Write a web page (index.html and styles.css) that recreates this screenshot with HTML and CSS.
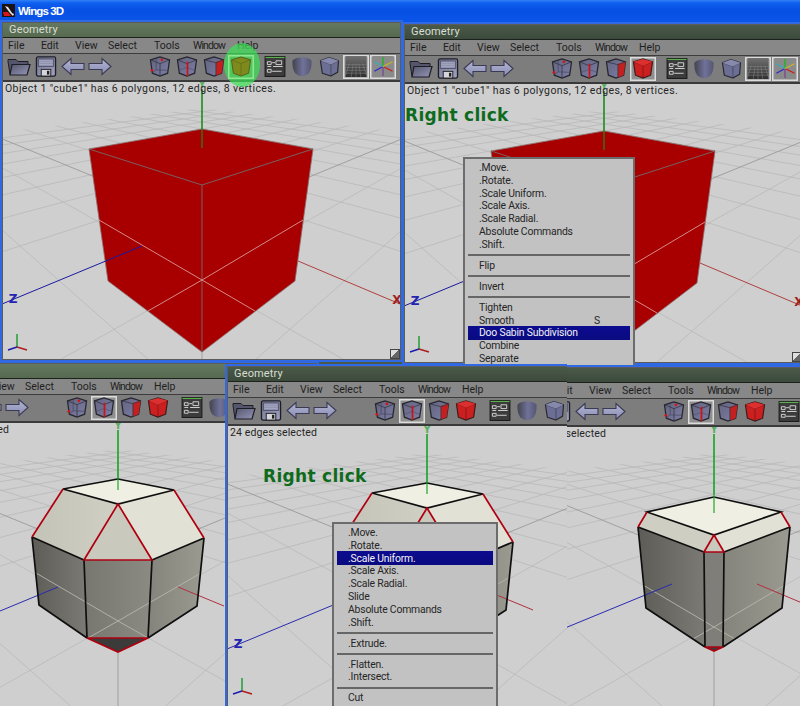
FILE: index.html
```html
<!DOCTYPE html>
<html lang="en">
<head>
<meta charset="utf-8">
<title>Wings 3D</title>
<link rel="stylesheet" href="styles.css">
</head>
<body>
<svg class="defs" aria-hidden="true">
  <defs>
    <linearGradient id="gBody" x1="0" y1="0" x2="1" y2="1"><stop offset="0" stop-color="#55566c"/><stop offset="1" stop-color="#9496b8"/></linearGradient>
    <linearGradient id="gFlop" x1="0" y1="0" x2="1" y2="1"><stop offset="0" stop-color="#74758f"/><stop offset="1" stop-color="#a0a2c2"/></linearGradient>
    <linearGradient id="gArrow" x1="0" y1="0" x2="0" y2="1"><stop offset="0" stop-color="#b4b6d4"/><stop offset="1" stop-color="#8a8cb2"/></linearGradient>
    <linearGradient id="gShade" x1="0" y1="0" x2="1" y2="0"><stop offset="0" stop-color="#43434f"/><stop offset=".55" stop-color="#70729a"/><stop offset="1" stop-color="#555670"/></linearGradient>
    <linearGradient id="gCube" x1="0" y1="0" x2="1" y2="1"><stop offset="0" stop-color="#63647f"/><stop offset="1" stop-color="#7c7ea6"/></linearGradient>
    <linearGradient id="gFloor" x1="0" y1="0" x2="0" y2="1"><stop offset="0" stop-color="#707070"/><stop offset="1" stop-color="#2f2f2f"/></linearGradient>
    <linearGradient id="gSideL" x1="0" y1="0" x2="1" y2="0"><stop offset="0" stop-color="#5d5c57"/><stop offset="1" stop-color="#7b7a74"/></linearGradient>
    <linearGradient id="gFront" x1="0" y1="0" x2="1" y2="0"><stop offset="0" stop-color="#77766f"/><stop offset="1" stop-color="#8b8a83"/></linearGradient>
    <linearGradient id="gSideR" x1="0" y1="0" x2="1" y2="0"><stop offset="0" stop-color="#85847c"/><stop offset="1" stop-color="#9b9a90"/></linearGradient>
    <linearGradient id="gUpL" x1="0" y1="0" x2="1" y2="0"><stop offset="0" stop-color="#c4c3b8"/><stop offset="1" stop-color="#d0cfc4"/></linearGradient>
    <clipPath id="floorClip"><polygon points="0,-113 -240,-84 -240,160 240,160 240,-84"/></clipPath>

    <symbol id="i-folder" viewBox="0 0 24 20">
      <path d="M3 18 1 5V3h8l2 2h10v4z" fill="#55566c" stroke="#1d1d26"/>
      <path d="M3 18.5 5 8h18l-3 10.500z" fill="url(#gBody)" stroke="#1d1d26" stroke-width="1.200"/>
    </symbol>
    <symbol id="i-floppy" viewBox="0 0 22 22">
      <rect x="1" y="1" width="20" height="20" rx="1.500" fill="url(#gFlop)" stroke="#1e1e28" stroke-width="1.400"/>
      <path d="M3 3h16v8H3z" fill="#8f90ac" stroke="#44445a" stroke-width=".8"/>
      <path d="M4 5h14M4 7h14M4 9h14" stroke="#b0b2cc" stroke-width=".7"/>
      <rect x="6" y="14" width="10" height="7" fill="#d5d5dd" stroke="#222"/>
      <rect x="12" y="15.500" width="2.500" height="4" fill="#222"/>
    </symbol>
    <symbol id="i-left" viewBox="0 0 24 20">
      <path d="M1 10 10 2v5h13v6H10v5z" fill="url(#gArrow)" stroke="#3a3a55" stroke-width="1.100"/>
    </symbol>
    <symbol id="i-right" viewBox="0 0 24 20">
      <path d="M23 10 14 2v5H1v6h13v5z" fill="url(#gArrow)" stroke="#3a3a55" stroke-width="1.100"/>
    </symbol>
    <symbol id="i-vertex" viewBox="0 0 22 22">
      <path d="M1 4 11 1l10 3-2 14-8 3-8-3z" fill="url(#gCube)" stroke="#26262e" stroke-width="1.300"/>
      <path d="M1 4l10 4 10-4M11 8v13" fill="none" stroke="#33333e" stroke-width=".8"/>
      <path d="M7 3.500v11l-4 3M7 14.500l12 .500" fill="none" stroke="#3b3b50" stroke-width=".6"/>
      <circle cx="13" cy="4" r="1.500" fill="#d01818"/><circle cx="2.500" cy="15" r="1.500" fill="#d01818"/>
    </symbol>
    <symbol id="i-edge" viewBox="0 0 22 22">
      <path d="M1 4 11 1l10 3-2 14-8 3-8-3z" fill="url(#gCube)" stroke="#26262e" stroke-width="1.300"/>
      <path d="M1 4l10 4 10-4" fill="none" stroke="#33333e" stroke-width=".8"/>
      <path d="M3 15l8-3 8 3" fill="none" stroke="#4a4a66" stroke-width=".6"/>
      <path d="M11.500 6v15" stroke="#cc1414" stroke-width="1.800"/>
    </symbol>
    <symbol id="i-face" viewBox="0 0 22 22">
      <path d="M1 4 11 1l10 3-2 14-8 3-8-3z" fill="url(#gCube)" stroke="#26262e" stroke-width="1.300"/>
      <path d="M13 6 21 4l-2 14-6 2.500z" fill="#c42020"/>
      <path d="M1 4l12 3 8-3M13 7v14" fill="none" stroke="#33333e" stroke-width=".8"/>
    </symbol>
    <symbol id="i-solid" viewBox="0 0 22 22">
      <path d="M1 4 11 1l10 3-2 14-8 3-8-3z" fill="#cc2020" stroke="#3a1a1a" stroke-width="1.200"/>
      <path d="M1 4l10 4 10-4M11 8v13" fill="none" stroke="#7a1212" stroke-width=".8"/>
      <path d="M1 4 11 1l10 3-10 4z" fill="#dc3030"/>
    </symbol>
    <symbol id="i-olive" viewBox="0 0 22 22">
      <path d="M1 4 11 1l10 3-2 14-8 3-8-3z" fill="#7f8a1c" stroke="#55601a" stroke-width="1"/>
      <path d="M1 4l10 4 10-4M11 8v13" fill="none" stroke="#62701a" stroke-width=".8"/>
    </symbol>
    <symbol id="i-panel" viewBox="0 0 22 22">
      <rect x=".6" y=".6" width="20.800" height="20.800" fill="#3c3c3c" stroke="#151515"/>
      <path d="M1 1.500h20" stroke="#5ab04a" stroke-width="1.200"/>
      <path d="M3 6h4v3H3zM3 14h4v3H3zM12 5h6v4h-6z" fill="none" stroke="#d4d4d4"/>
      <path d="M8 7h3M9 11h10M3 11h4M8 16h10" stroke="#d4d4d4"/>
    </symbol>
    <symbol id="i-shaded" viewBox="0 0 22 22">
      <path d="M1 5C3 2 8 1.500 11 1.500S19 2 21 5c0 5 0 9-3 13-2 2-5 3-7 3s-5-1-7-3C1 14 1 10 1 5z" fill="url(#gShade)"/>
    </symbol>
    <symbol id="i-smooth" viewBox="0 0 22 22">
      <path d="M2 5 11 1.500 21 5l-1 12-7 4-9-3z" fill="#6c6e94" stroke="#26262f" stroke-width="1.200" stroke-linejoin="round"/>
      <path d="M2 5l11 4 8-4M13 9v12" fill="none" stroke="#3b3b52" stroke-width=".7"/>
      <path d="M2 5 11 1.500 21 5l-8 4z" fill="#8688ac"/>
    </symbol>
    <symbol id="i-grid" viewBox="0 0 22 22">
      <rect width="22" height="22" fill="url(#gFloor)"/>
      <path d="M0 9 22 9M0 12h22M0 15h22M0 18h22M4 8 0 20M8 8 6 22M11 8v14M14 8l2 14M18 8l4 12" stroke="#8a8a8a" stroke-width=".5"/>
    </symbol>
    <symbol id="i-axes" viewBox="0 0 22 22">
      <rect width="22" height="22" fill="#8a8a8a"/>
      <path d="M11 11 2 16" stroke="#2a2ad0" stroke-width="1.400"/>
      <path d="M11 11 21 16" stroke="#d01818" stroke-width="1.400"/>
      <path d="M11 11V1" stroke="#18b818" stroke-width="1.400"/>
      <path d="M11 11v10" stroke="#7a4a90" stroke-width="1.400"/>
      <path d="M11 11 21 6" stroke="#c8b820" stroke-width="1.400"/>
      <path d="M11 11 2 6" stroke="#30b0c0" stroke-width="1.400"/>
    </symbol>

    <g id="floor">
      <g clip-path="url(#floorClip)" stroke="#b9b9b9" stroke-width=".8" fill="none">
        <path d="M-220 -8.700 220 380.700M-220 -64.500 220 182.500M-220 -105.300 220 37.300M-220 -115 220 2.800M-220 -121.800 220 -21.400M-220 -126.800 220 -39.400M-220 -130.700 220 -53.300M-220 -133.800 220 -64.200M-220 -136.300 220 -73.100M-220 -138.400 220 -80.400"/>
        <path d="M220 -8.700-220 380.700M220 -64.500-220 182.500M220 -105.300-220 37.300M220 -115-220 2.800M220 -121.800-220 -21.400M220 -126.800-220 -39.400M220 -130.700-220 -53.300M220 -133.800-220 -64.200M220 -136.300-220 -73.100M220 -138.400-220 -80.400"/>
      </g>
      <path d="M-220 -90.400 0 0M220 -90.400 0 0M0 0V145" stroke="#9a9a9a" stroke-width=".9" fill="none"/>
      <path d="M0 -132V-72" stroke="#1fa52a" stroke-width="1.200"/>
    </g>
    <g id="labels">
      <text x="0" y="-133" class="lab lab-y">Y</text>
      <text x="-189" y="82" class="lab lab-z">Z</text>
      <text x="195" y="83" class="lab lab-x">X</text>
    </g>
    <g id="mini">
      <path d="M14 265V252" stroke="#159a2a" stroke-width="1.400"/>
      <path d="M14 265 5 268" stroke="#1c1cb0" stroke-width="1.400"/>
      <path d="M14 265 24 268" stroke="#b01c1c" stroke-width="1.400"/>
    </g>
    <g id="redcube">
      <polygon points="-113,-72 0,-92 111,-72 93,60 0,131 -94,60" fill="#a80000" stroke="#8a7070" stroke-width=".8"/>
      <path d="M-113 -72 0 -36 111 -72M0 -36V131" fill="none" stroke="#7a6060" stroke-width="1"/>
      <path d="M-103 -1 0 59 101 -1M0 59-54 90M0 59 53 90" fill="none" stroke="#d89a9a" stroke-width=".9"/>
      <path d="M0 -132V-73" stroke="#1f8a1f" stroke-width="1.200"/>
      <path d="M-60 25-200 83" stroke="#1a1aa0" stroke-width="1"/>
      <path d="M96 40 198 83" stroke="#b04040" stroke-width="1"/>
    </g>
    <g id="dooCube">
      <polygon points="0,-83 -55,-73 0,-58 56,-72" fill="#efefe4"/>
      <polygon points="-55,-73 0,-58 -34,-2 -86,-25" fill="url(#gUpL)"/>
      <polygon points="56,-72 0,-58 34,-2 86,-24" fill="#e2e1d5"/>
      <polygon points="0,-58 -34,-2 34,-2" fill="#cac9bd"/>
      <polygon points="-86,-25 -34,-2 -31,76 -79,43" fill="url(#gSideL)"/>
      <polygon points="-34,-2 34,-2 30,76 -31,76" fill="url(#gFront)"/>
      <polygon points="34,-2 86,-24 79,44 30,76" fill="url(#gSideR)"/>
      <polygon points="-31,76 30,76 0,90" fill="#3b3b39"/>
      <path d="M-82 11 0 59 83 11M0 59-30 76M0 59 30 76" fill="none" stroke="#b5b5ae" stroke-width=".9"/>
      <path d="M-60 25-200 83" stroke="#2a2ab0" stroke-width="1"/>
      <path d="M60 25 106 44" stroke="#b03040" stroke-width="1"/>
      <path d="M0 -83-55 -73 0 -58 56 -72zM-86 -25-34 -2M34 -2 86 -24M-86 -25-79 43-31 76M86 -24 79 44 30 76M-34 -2-31 76M34 -2 30 76" fill="none" stroke="#0f0f0f" stroke-width="1.700"/>
      <path d="M-55 -73-86 -25M56 -72 86 -24M0 -58-34 -2H34zM-31 76H30L0 90z" fill="none" stroke="#b00010" stroke-width="1.700"/>
      <path d="M0 -132V-72" stroke="#1fa52a" stroke-width="1.200"/>
    </g>
    <g id="chamferCube">
      <polygon points="0,-69 -67,-54 0,-31 67,-54" fill="#efefe4"/>
      <polygon points="-67,-54 0,-31 -10,-14 -76,-39" fill="#cfcec3"/>
      <polygon points="67,-54 0,-31 10,-14 76,-39" fill="#e2e1d5"/>
      <polygon points="0,-31 -10,-14 10,-14" fill="#cac9bd"/>
      <polygon points="-76,-39 -10,-14 -9,81 -68,42" fill="url(#gSideL)"/>
      <polygon points="-10,-14 10,-14 9,81 -9,81" fill="#7f7e78"/>
      <polygon points="10,-14 76,-39 68,42 9,81" fill="url(#gSideR)"/>
      <polygon points="-9,81 9,81 0,85" fill="#3b3b39"/>
      <path d="M-71 19 0 61 71 19M0 61-21 73M0 61 21 73" fill="none" stroke="#b5b5ae" stroke-width=".9"/>
      <path d="M-42 18-200 83" stroke="#2a2ab0" stroke-width="1"/>
      <path d="M43 18 100 42" stroke="#b03040" stroke-width="1"/>
      <path d="M0 -69-67 -54 0 -31 67 -54zM-76 -39-10 -14M10 -14 76 -39M-76 -39-68 42-9 81M76 -39 68 42 9 81M-10 -14-9 81M10 -14 9 81" fill="none" stroke="#0f0f0f" stroke-width="1.700"/>
      <path d="M-67 -54-76 -39M67 -54 76 -39M0 -31-10 -14H10zM-9 81H9L0 85z" fill="none" stroke="#b00010" stroke-width="1.700"/>
      <path d="M0 -132V-53" stroke="#1fa52a" stroke-width="1.200"/>
    </g>
  </defs>
</svg>

<main class="desktop">
  <header class="xpbar">
    <svg class="xplogo" viewBox="0 0 13 13"><rect width="13" height="13" fill="#1a1214"/><path d="M1 8h5l3 4H2z" fill="#d81818"/><path d="M3 2l3 1 4 6 2 1-1 2-3-3-3-4z" fill="#e8e8e8"/></svg>
    <span class="xptitle">Wings 3D</span>
  </header>

  <!-- Window A -->
  <section class="win win-a active-title">
    <div class="title">Geometry</div>
    <nav class="menubar"><span>File</span><span>Edit</span><span>View</span><span>Select</span><span>Tools</span><span>Window</span><span>Help</span></nav>
    <div class="toolbar">
      <span class="cell"><svg class="ic"><use href="#i-folder"/></svg></span><span class="cell"><svg class="ic"><use href="#i-floppy"/></svg></span><span class="cell"><svg class="ic"><use href="#i-left"/></svg></span><span class="cell"><svg class="ic"><use href="#i-right"/></svg></span>
      <span class="cell gap-l"><svg class="ic"><use href="#i-vertex"/></svg></span><span class="cell"><svg class="ic"><use href="#i-edge"/></svg></span><span class="cell"><svg class="ic"><use href="#i-face"/></svg></span><span class="cell on lifted"><svg class="ic"><use href="#i-olive"/></svg></span>
      <span class="cell gap-s"><svg class="ic"><use href="#i-panel"/></svg></span><span class="cell"><svg class="ic"><use href="#i-shaded"/></svg></span><span class="cell"><svg class="ic"><use href="#i-smooth"/></svg></span><span class="cell on"><svg class="ic"><use href="#i-grid"/></svg></span><span class="cell on"><svg class="ic"><use href="#i-axes"/></svg></span>
    </div>
    <div class="view">
      <svg class="scene"><g transform="translate(199 139)"><use href="#floor"/><use href="#redcube"/><use href="#labels"/></g><use href="#mini"/></svg>
      <p class="status status-long">Object 1 "cube1" has 6 polygons, 12 edges, 8 vertices.</p>
      <i class="corner"></i>
    </div>
    <div class="glow"></div>
  </section>

  <!-- Window B -->
  <section class="win win-b">
    <div class="title">Geometry</div>
    <nav class="menubar"><span>File</span><span>Edit</span><span>View</span><span>Select</span><span>Tools</span><span>Window</span><span>Help</span></nav>
    <div class="toolbar">
      <span class="cell"><svg class="ic"><use href="#i-folder"/></svg></span><span class="cell"><svg class="ic"><use href="#i-floppy"/></svg></span><span class="cell"><svg class="ic"><use href="#i-left"/></svg></span><span class="cell"><svg class="ic"><use href="#i-right"/></svg></span>
      <span class="cell gap-l"><svg class="ic"><use href="#i-vertex"/></svg></span><span class="cell"><svg class="ic"><use href="#i-edge"/></svg></span><span class="cell"><svg class="ic"><use href="#i-face"/></svg></span><span class="cell on"><svg class="ic"><use href="#i-solid"/></svg></span>
      <span class="cell gap-s"><svg class="ic"><use href="#i-panel"/></svg></span><span class="cell"><svg class="ic"><use href="#i-shaded"/></svg></span><span class="cell"><svg class="ic"><use href="#i-smooth"/></svg></span><span class="cell on"><svg class="ic"><use href="#i-grid"/></svg></span><span class="cell on"><svg class="ic"><use href="#i-axes"/></svg></span>
    </div>
    <div class="view">
      <svg class="scene"><g transform="translate(199 139)"><use href="#floor"/><use href="#redcube"/><use href="#labels"/></g><use href="#mini"/></svg>
      <p class="status status-long">Object 1 "cube1" has 6 polygons, 12 edges, 8 vertices.</p>
      <p class="hint">Right click</p>
      <i class="corner"></i>
    </div>
  </section>
  <ul class="popup popup-b">
    <li>.Move.</li><li>.Rotate.</li><li>.Scale Uniform.</li><li>.Scale Axis.</li><li>.Scale Radial.</li><li>Absolute Commands</li><li>.Shift.</li>
    <li class="sep"></li><li>Flip</li><li class="sep"></li><li>Invert</li><li class="sep"></li>
    <li>Tighten</li><li class="key"><span>Smooth</span><span>S</span></li><li class="sel">Doo Sabin Subdivision</li><li>Combine</li><li>Separate</li>
  </ul>

  <!-- Window C -->
  <section class="win win-c active-title">
    <div class="title">Geometry</div>
    <nav class="menubar"><span>File</span><span>Edit</span><span>View</span><span>Select</span><span>Tools</span><span>Window</span><span>Help</span></nav>
    <div class="toolbar">
      <span class="cell"><svg class="ic"><use href="#i-folder"/></svg></span><span class="cell"><svg class="ic"><use href="#i-floppy"/></svg></span><span class="cell"><svg class="ic"><use href="#i-left"/></svg></span><span class="cell"><svg class="ic"><use href="#i-right"/></svg></span>
      <span class="cell gap-l"><svg class="ic"><use href="#i-vertex"/></svg></span><span class="cell on"><svg class="ic"><use href="#i-edge"/></svg></span><span class="cell"><svg class="ic"><use href="#i-face"/></svg></span><span class="cell"><svg class="ic"><use href="#i-solid"/></svg></span>
      <span class="cell gap-s"><svg class="ic"><use href="#i-panel"/></svg></span><span class="cell"><svg class="ic"><use href="#i-shaded"/></svg></span><span class="cell"><svg class="ic"><use href="#i-smooth"/></svg></span><span class="cell on"><svg class="ic"><use href="#i-grid"/></svg></span><span class="cell on"><svg class="ic"><use href="#i-axes"/></svg></span>
    </div>
    <div class="view">
      <svg class="scene"><g transform="translate(198 139)"><use href="#floor"/><use href="#dooCube"/><use href="#labels"/></g><use href="#mini"/></svg>
      <p class="status">24 edges selected</p>
    </div>
  </section>

  <!-- Window E -->
  <section class="win win-e">
    <div class="title">Geometry</div>
    <nav class="menubar"><span>File</span><span>Edit</span><span>View</span><span>Select</span><span>Tools</span><span>Window</span><span>Help</span></nav>
    <div class="toolbar">
      <span class="cell"><svg class="ic"><use href="#i-folder"/></svg></span><span class="cell"><svg class="ic"><use href="#i-floppy"/></svg></span><span class="cell"><svg class="ic"><use href="#i-left"/></svg></span><span class="cell"><svg class="ic"><use href="#i-right"/></svg></span>
      <span class="cell gap-l"><svg class="ic"><use href="#i-vertex"/></svg></span><span class="cell on"><svg class="ic"><use href="#i-edge"/></svg></span><span class="cell"><svg class="ic"><use href="#i-face"/></svg></span><span class="cell"><svg class="ic"><use href="#i-solid"/></svg></span>
      <span class="cell gap-s"><svg class="ic"><use href="#i-panel"/></svg></span><span class="cell"><svg class="ic"><use href="#i-shaded"/></svg></span><span class="cell"><svg class="ic"><use href="#i-smooth"/></svg></span><span class="cell on"><svg class="ic"><use href="#i-grid"/></svg></span><span class="cell on"><svg class="ic"><use href="#i-axes"/></svg></span>
    </div>
    <div class="view">
      <svg class="scene"><g transform="translate(197 139)"><use href="#floor"/><use href="#chamferCube"/><use href="#labels"/></g><use href="#mini"/></svg>
      <p class="status">24 edges selected</p>
    </div>
  </section>

  <!-- Window D -->
  <section class="win win-d">
    <div class="title">Geometry</div>
    <nav class="menubar"><span>File</span><span>Edit</span><span>View</span><span>Select</span><span>Tools</span><span>Window</span><span>Help</span></nav>
    <div class="toolbar">
      <span class="cell"><svg class="ic"><use href="#i-folder"/></svg></span><span class="cell"><svg class="ic"><use href="#i-floppy"/></svg></span><span class="cell"><svg class="ic"><use href="#i-left"/></svg></span><span class="cell"><svg class="ic"><use href="#i-right"/></svg></span>
      <span class="cell gap-l"><svg class="ic"><use href="#i-vertex"/></svg></span><span class="cell on"><svg class="ic"><use href="#i-edge"/></svg></span><span class="cell"><svg class="ic"><use href="#i-face"/></svg></span><span class="cell"><svg class="ic"><use href="#i-solid"/></svg></span>
      <span class="cell gap-s"><svg class="ic"><use href="#i-panel"/></svg></span><span class="cell"><svg class="ic"><use href="#i-shaded"/></svg></span><span class="cell"><svg class="ic"><use href="#i-smooth"/></svg></span><span class="cell on"><svg class="ic"><use href="#i-grid"/></svg></span><span class="cell on"><svg class="ic"><use href="#i-axes"/></svg></span>
    </div>
    <div class="view">
      <svg class="scene"><g transform="translate(199 140)"><use href="#floor"/><use href="#dooCube"/><use href="#labels"/></g><use href="#mini"/></svg>
      <p class="status">24 edges selected</p>
      <p class="hint hint-d">Right click</p>
    </div>
  </section>
  <ul class="popup popup-d">
    <li>.Move.</li><li>.Rotate.</li><li class="sel">.Scale Uniform.</li><li>.Scale Axis.</li><li>.Scale Radial.</li><li>Slide</li><li>Absolute Commands</li><li>.Shift.</li>
    <li class="sep"></li><li>.Extrude.</li><li class="sep"></li><li>.Flatten.</li><li>.Intersect.</li><li class="sep"></li><li>Cut</li>
  </ul>
</main>
</body>
</html>
```

FILE: styles.css
```css
* { box-sizing: border-box; }
html, body { margin: 0; padding: 0; }
body { width: 800px; height: 706px; overflow: hidden; background: #3c4a3a; font-family: Roboto, "Liberation Sans", sans-serif; }

.defs { position: absolute; width: 0; height: 0; }

.desktop { position: relative; width: 800px; height: 706px; overflow: hidden; background: #4a5a48; }

.xpbar {
  position: absolute; left: 0; top: 0; width: 800px; height: 23px;
  display: flex; align-items: flex-start; gap: 3px; padding: 4px 0 0 2px;
  background: linear-gradient(#2f80f5 0, #0f5ff0 3px, #0650e4 10px, #0a55e8 21px);
}
.xplogo { width: 13px; height: 13px; flex: none; }
.xptitle { color: #fff; font: 700 11.500px/14px "Liberation Sans", sans-serif; letter-spacing: -.9px; }

.win {
  position: absolute; display: flex; flex-direction: column; overflow: hidden;
  border: 1px solid #5c5c5c; box-shadow: 0 0 0 2px #2f6ae4;
  background: #cfcfcf;
}
.win-a { left: 2px; top: 22px; width: 399px; height: 338px; }
.win-b { left: 404px; top: 24px; width: 399px; height: 339px; }
.win-c { left: -81px; top: 363px; width: 398px; height: 345px; }
.win-d { left: 227px; top: 366px; width: 340px; height: 345px; border-right: 0; clip-path: inset(-2px 0 0 -2px); }
.win-e { left: 516px; top: 367px; width: 399px; height: 345px; }

.title {
  flex: none; height: 15px; padding-left: 6px;
  font-size: 11px; line-height: 14px; letter-spacing: .15px; color: #d9ddd2;
  background: linear-gradient(#4a5a48, #3c4a3c);
  border-bottom: 1px solid #1d221c;
}
.active-title .title { background: linear-gradient(#64785f, #566a50); }
.win-e .title { padding-left: 0; }

.menubar {
  flex: none; height: 16px; display: grid;
  grid-template-columns: 33px 34px 33px 46px 39px 44px auto;
  padding-left: 5px; font-size: 10.500px; line-height: 15px; color: #1f1f1f;
  background: #888; border-bottom: 1px solid #3c3c3c;
}
.menubar span:nth-child(6) { letter-spacing: -.9px; }

.toolbar {
  flex: none; height: 28px; display: flex; align-items: center;
  padding: 0 0 1px 2px; background: #7d7d7d; border-bottom: 2px solid #3a3a3a;
}
.cell { flex: none; width: 27px; height: 24px; display: flex; align-items: center; justify-content: center; }
.gap-l { margin-left: 33px; }
.gap-s { margin-left: 7px; }
.ic { width: 24px; height: 21px; display: block; overflow: visible; }
.on { width: 26px; margin: 0 .5px; box-shadow: inset 0 0 0 1.500px #dcdcdc; background: #8f8f8f; }
.gap-s.on { margin-left: 7px; }
.lifted { position: relative; z-index: 2; box-shadow: inset 0 0 0 1.500px #8fe88f; background: rgba(90, 200, 90, .35); }

.view { position: relative; flex: 1; min-height: 0; overflow: hidden; background: #cfcfcf; }
.scene { position: absolute; left: 0; top: 0; width: 400px; height: 345px; overflow: visible; }
.status { position: relative; margin: 0; padding: 1px 0 0 2px; font-size: 10.500px; line-height: 12px; color: #262626; letter-spacing: .12px; white-space: nowrap; }
.status-long { letter-spacing: .4px; }
.hint { position: absolute; left: 0; top: 21px; margin: 0; font: 700 17px/20px "DejaVu Sans", sans-serif; letter-spacing: .3px; color: #0e6a1c; white-space: nowrap; }
.hint-d { left: 35px; top: 40px; }
.corner { position: absolute; right: 0; bottom: 0; width: 10px; height: 10px; border: 1px solid #444; background: linear-gradient(135deg, #dedede 50%, #666 50%); }

.lab { font: 700 12px "DejaVu Sans", sans-serif; text-anchor: middle; }
.lab-y { fill: #5aad62; font-size: 10px; }
.lab-z { fill: #2424b0; }
.lab-x { fill: #a01e1e; }

.glow {
  position: absolute; left: 221px; top: 20px; width: 36px; height: 44px; border-radius: 50%;
  background: rgba(60, 225, 85, .72); z-index: 1; pointer-events: none;
}

.popup {
  position: absolute; margin: 0; padding: 3px 3px 0; list-style: none;
  border: 2px solid #6c6c6c; background: #c2c2c2;
  font-size: 10.400px; line-height: 12.800px; color: #262626; letter-spacing: -.2px;
}
.popup-b { left: 463px; top: 157px; width: 172px; height: 210px; overflow: hidden; }
.popup-d { left: 332px; top: 522px; width: 166px; height: 194px; overflow: hidden; }
.popup li { height: 12.800px; padding-left: 11px; white-space: nowrap; }
.popup .sep { height: 2px; padding: 0; margin: 2.500px 0 3.700px; background: #666; }
.popup .sel { background: linear-gradient(#0c0c90, #0a0a80); color: #f2f2f2; height: 14px; margin: -1.300px 0 .1px; padding-top: 1.300px; }
.popup .key { display: flex; justify-content: space-between; padding-right: 30px; }
```
